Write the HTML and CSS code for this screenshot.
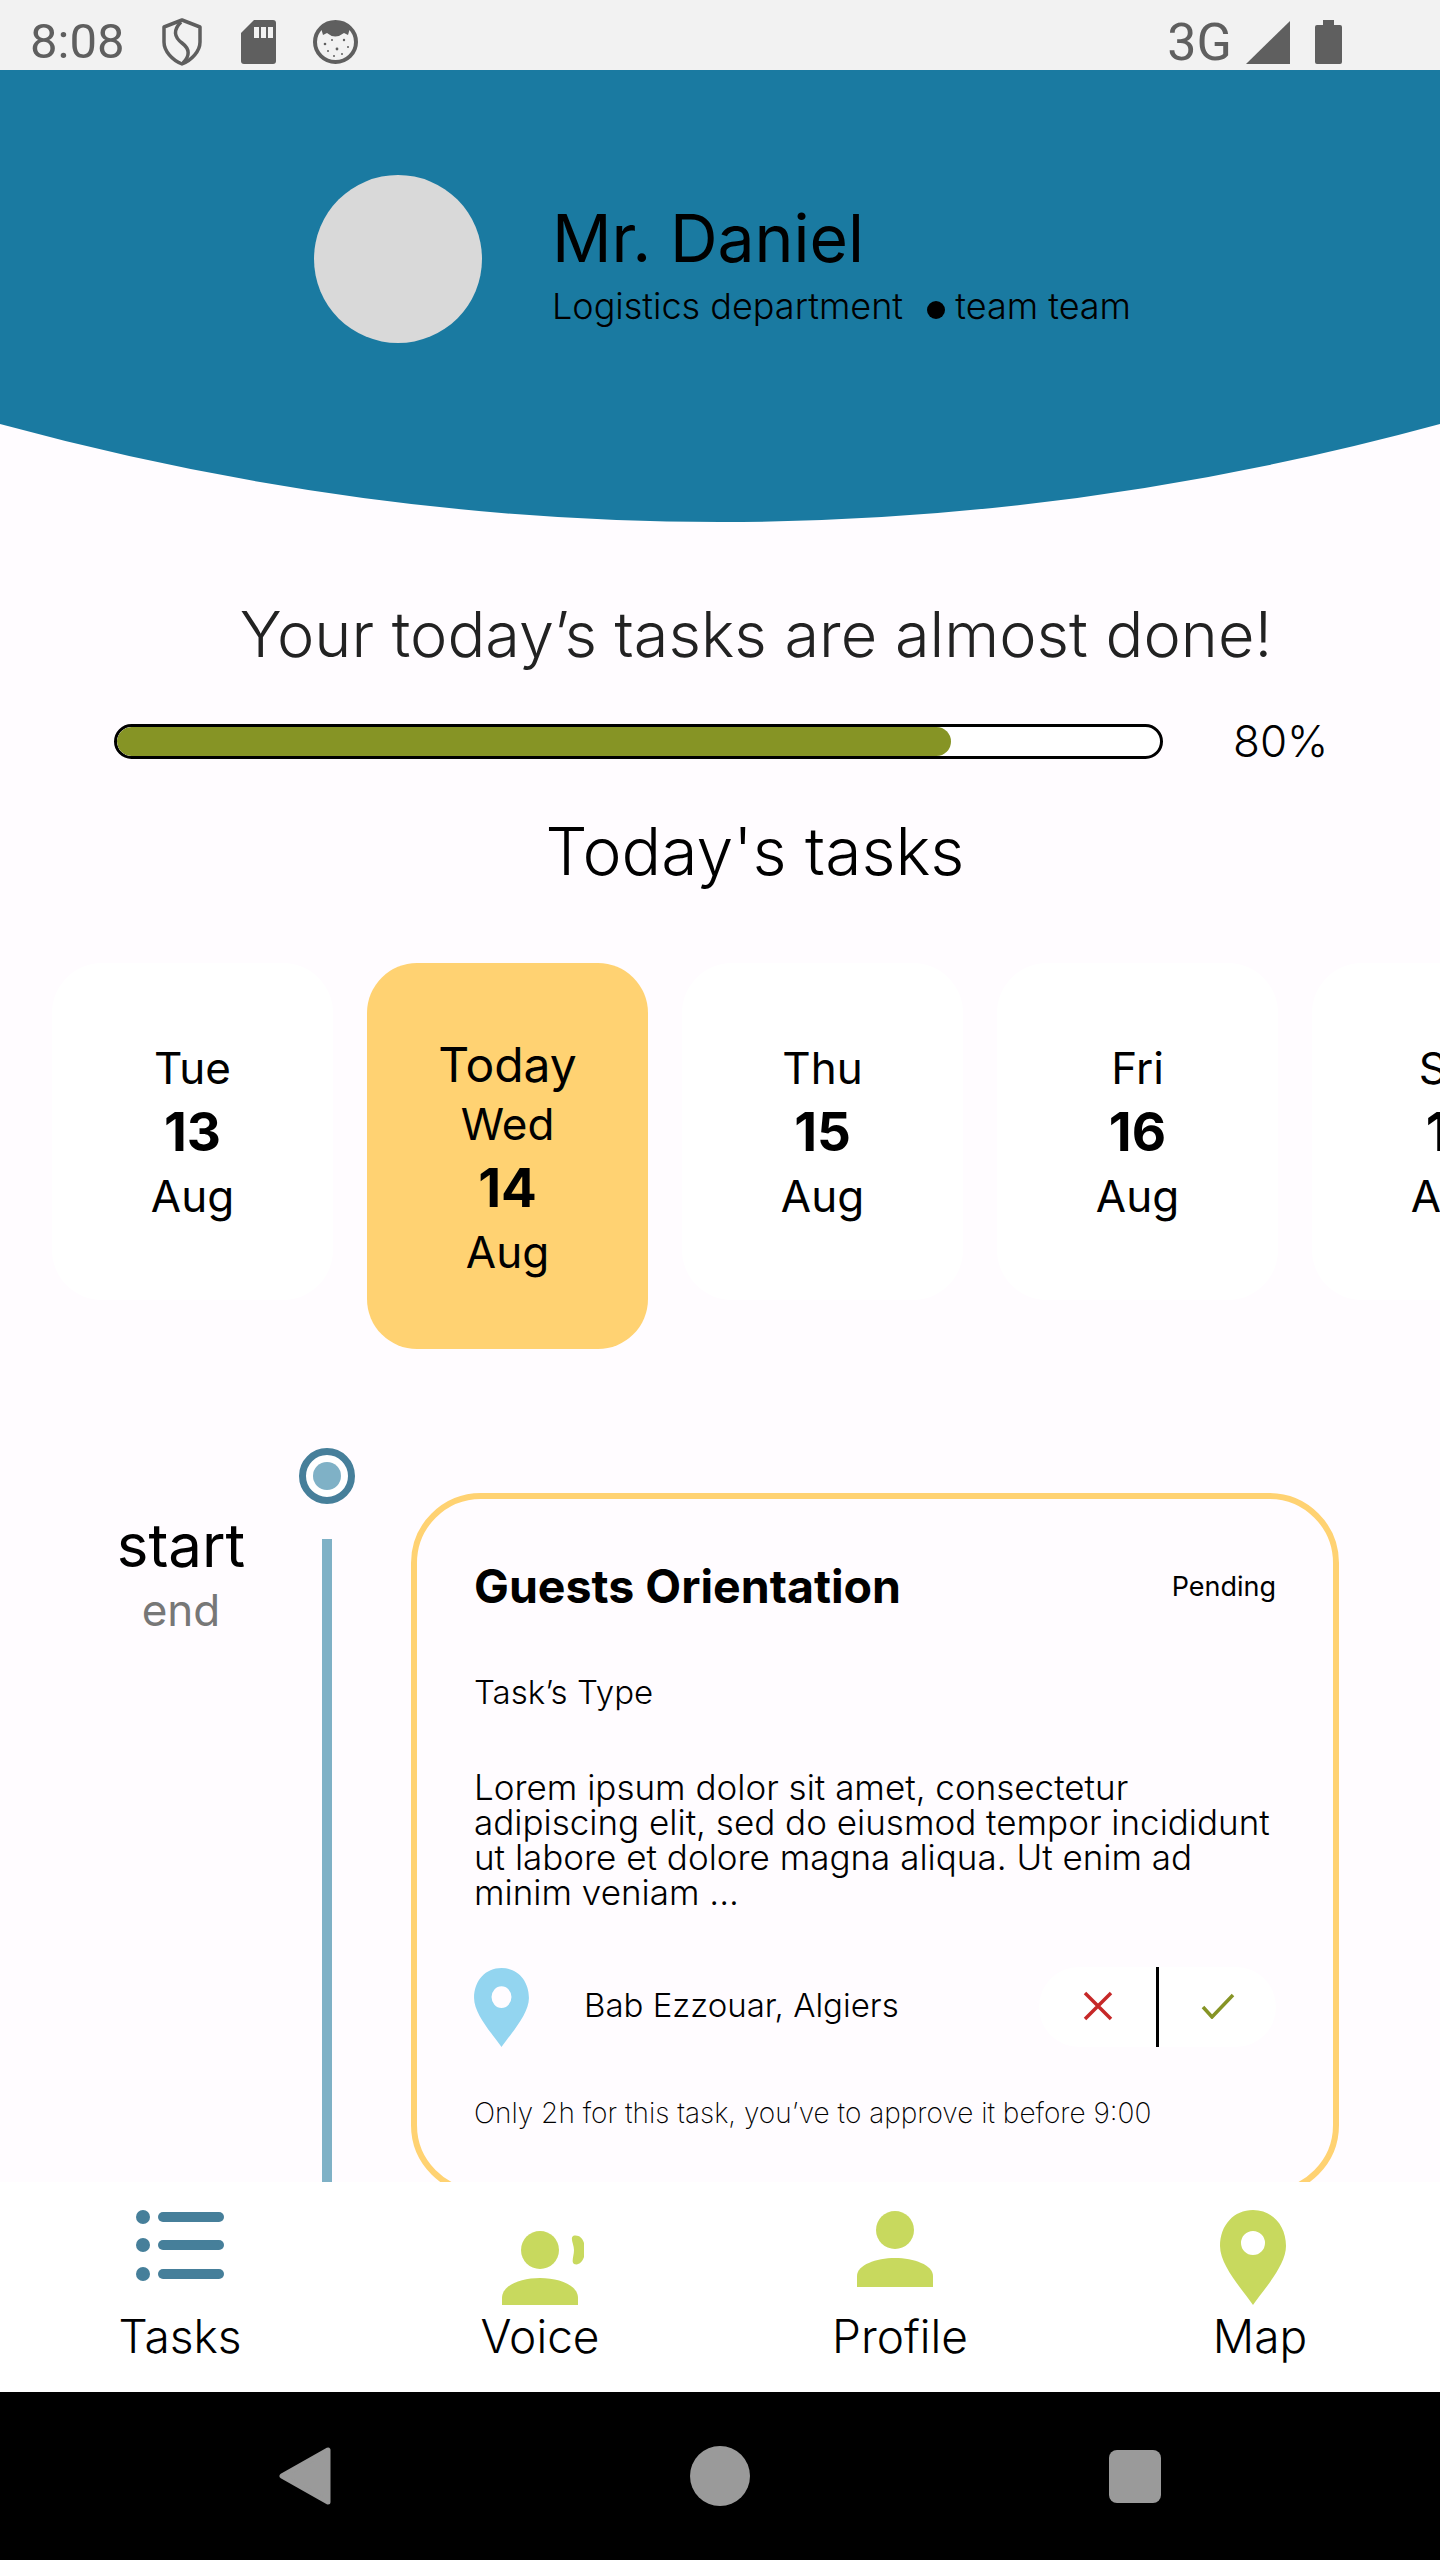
FILE: index.html
```html
<!DOCTYPE html>
<html lang="en">
<head>
  <meta charset="UTF-8" />
  <title>Today's tasks</title>
  <link rel="stylesheet" href="styles.css">
</head>
<body>
  <div class="phone">
    <div class="status-bar">
      <span class="clock">8:08</span>
      <svg class="ic-shield" viewBox="0 0 40 48"><path d="M20 2 L38 9 V24 C38 33 30 42 20 46 C10 42 2 33 2 24 V9 Z" fill="none" stroke="#5f5f5f" stroke-width="3.5" stroke-linejoin="round"/><path d="M19 4 C11 12 12 19 20 25 C28 31 28 38 21 45" fill="none" stroke="#5f5f5f" stroke-width="3.5"/></svg>
      <svg class="ic-sd" viewBox="0 0 35 44"><path d="M13 0 H32 Q35 0 35 3 V41 Q35 44 32 44 H3 Q0 44 0 41 V13 Z" fill="#5f5f5f"/><rect x="13" y="7" width="5" height="11" fill="#f2f2f2"/><rect x="20" y="7" width="5" height="11" fill="#f2f2f2"/><rect x="27" y="7" width="5" height="11" fill="#f2f2f2"/></svg>
      <svg class="ic-cat" viewBox="0 0 45 44"><ellipse cx="22.5" cy="22" rx="20.5" ry="20" fill="none" stroke="#5f5f5f" stroke-width="4"/><path d="M8 8 Q22 -4 37 8 L35 15 L31 13 Q22 20 14 13 L10 15 Z" fill="#5f5f5f"/><g fill="#5f5f5f"><circle cx="12" cy="24" r="1.3"/><circle cx="19" cy="20" r="1"/><circle cx="24" cy="29" r="1.4"/><circle cx="31" cy="20" r="1.2"/><circle cx="15" cy="31" r="1"/><circle cx="29" cy="34" r="1"/><circle cx="35" cy="27" r="1"/><circle cx="21" cy="36" r="1"/></g></svg>
      <span class="status-spacer"></span>
      <span class="net">3G</span>
      <svg class="ic-signal" viewBox="0 0 44 43"><path d="M44 0 V43 H0 Z" fill="#5f5f5f"/></svg>
      <svg class="ic-battery" viewBox="0 0 27 44"><path d="M8 0 H19 V5 H25 Q27 5 27 7 V42 Q27 44 25 44 H2 Q0 44 0 42 V7 Q0 5 2 5 H8 Z" fill="#5f5f5f"/></svg>
    </div>

    <main class="content">
      <header class="hero">
        <div class="avatar"></div>
        <div class="hero-text">
          <h2 class="hero-name">Mr. Daniel</h2>
          <p class="hero-sub">Logistics department <span class="hero-dot"></span>team team</p>
        </div>
      </header>
      <svg class="hero-curve" viewBox="0 0 1440 98" preserveAspectRatio="none"><path d="M0 0 H1440 Q720 196 0 0 Z" fill="#1a7aa1"/></svg>

      <p class="summary">Your today’s tasks are almost done!</p>
      <div class="progress-row">
        <div class="progress-track"><div class="progress-fill" style="width: 80%"></div></div>
        <span class="progress-label">80%</span>
      </div>
      <h1 class="section-title">Today's tasks</h1>

      <div class="days">
        <div class="day"><span>Tue</span><b>13</b><span>Aug</span></div>
        <div class="day day-active"><span class="day-today">Today</span><span>Wed</span><b>14</b><span>Aug</span></div>
        <div class="day"><span>Thu</span><b>15</b><span>Aug</span></div>
        <div class="day"><span>Fri</span><b>16</b><span>Aug</span></div>
        <div class="day"><span>Sat</span><b>17</b><span>Aug</span></div>
      </div>

      <section class="timeline">
        <div class="times">
          <div class="time-start">start</div>
          <div class="time-end">end</div>
        </div>
        <div class="rail">
          <div class="rail-dot"></div>
          <div class="rail-line"></div>
        </div>
        <article class="task">
          <div class="task-head">
            <h3 class="task-title">Guests Orientation</h3>
            <span class="task-status">Pending</span>
          </div>
          <p class="task-type">Task’s Type</p>
          <p class="task-desc">Lorem ipsum dolor sit amet, consectetur<br>adipiscing elit, sed do eiusmod tempor incididunt<br>ut labore et dolore magna aliqua. Ut enim ad<br>minim veniam ...</p>
          <div class="task-foot">
            <svg class="task-pin" viewBox="0 0 66 95"><path fill-rule="evenodd" d="M33 0 C52 0 66 15 66 36 C66 55 45 78 33 95 C21 78 0 55 0 36 C0 15 14 0 33 0 Z M33 22 A12 13 0 1 0 33 48 A12 13 0 1 0 33 22 Z" fill="#93d5f0"/></svg>
            <span class="task-place">Bab Ezzouar, Algiers</span>
            <div class="task-actions">
              <button class="action"><svg viewBox="0 0 30 30" width="30" height="30"><path d="M2 2 L28 28 M28 2 L2 28" stroke="#c62828" stroke-width="3.5" fill="none"/></svg></button>
              <button class="action action-ok"><svg viewBox="0 0 34 26" width="34" height="26"><path d="M2 14 L11 24 L32 2" stroke="#869425" stroke-width="3.5" fill="none"/></svg></button>
            </div>
          </div>
          <p class="task-note">Only 2h for this task, you’ve to approve it before 9:00</p>
        </article>
      </section>
    </main>

    <nav class="tabs">
      <div class="tab">
        <svg class="tab-icon" viewBox="0 0 88 96" width="88" height="96"><g fill="#467f9a"><circle cx="7" cy="7" r="7"/><circle cx="7" cy="35" r="7"/><circle cx="7" cy="64" r="7"/><rect x="22" y="2" width="66" height="10" rx="5"/><rect x="22" y="30" width="66" height="10" rx="5"/><rect x="22" y="59" width="66" height="10" rx="5"/></g></svg>
        <span>Tasks</span>
      </div>
      <div class="tab">
        <svg class="tab-icon" viewBox="0 0 88 96" width="88" height="96"><g fill="#c8d95e"><circle cx="44" cy="40" r="19"/><path d="M6 95 V88 C6 75 25 68 44 68 C63 68 82 75 82 88 V95 Z"/><path d="M77 26 C84 24 89 30 89 40 C89 50 84 56 78 54 C75 52 78 46 78 40 C78 34 74 29 77 26 Z"/></g></svg>
        <span>Voice</span>
      </div>
      <div class="tab">
        <svg class="tab-icon" viewBox="0 0 88 96" width="88" height="96"><g fill="#c8d95e"><circle cx="39" cy="20" r="19"/><path d="M1 77 V66 C1 55 20 48 39 48 C58 48 77 55 77 66 V77 Z"/></g></svg>
        <span>Profile</span>
      </div>
      <div class="tab">
        <svg class="tab-icon" viewBox="0 0 88 96" width="88" height="96"><path fill-rule="evenodd" d="M37 0 C56 0 70 15 70 36 C70 55 49 78 37 95 C25 78 4 55 4 36 C4 15 18 0 37 0 Z M37 21 A12 12 0 1 0 37 45 A12 12 0 1 0 37 21 Z" fill="#c8d95e"/></svg>
        <span>Map</span>
      </div>
    </nav>

    <div class="nav-bar">
      <svg class="nav-back" viewBox="0 0 52 58"><path d="M49 3 V55 L3 29 Z" fill="#9a9a9a" stroke="#9a9a9a" stroke-width="5" stroke-linejoin="round"/></svg>
      <div class="nav-home"></div>
      <div class="nav-recent"></div>
    </div>
  </div>
</body>
</html>
```

FILE: styles.css
```css
* {
  box-sizing: border-box;
}
html, body {
  margin: 0;
  padding: 0;
}
body {
  font-family: Inter, "Noto Sans", sans-serif;
  font-weight: 300;
  color: #000;
  background: #fffcff;
}
h1, h2, h3, p {
  margin: 0;
  font-weight: inherit;
}
.phone {
  width: 1440px;
  height: 2560px;
  display: flex;
  flex-direction: column;
  overflow: hidden;
}

/* status bar */
.status-bar {
  height: 70px;
  flex: none;
  background: #f2f2f2;
  display: flex;
  align-items: center;
  padding: 14px 0 0 30px;
  color: #5f5f5f;
  font-family: Roboto, sans-serif;
  font-weight: 400;
}
.clock {
  font-size: 49px;
  line-height: 56px;
  width: 132px;
}
.ic-shield {
  width: 40px;
  height: 48px;
  margin-right: 39px;
}
.ic-sd {
  width: 35px;
  height: 44px;
  margin-right: 37px;
}
.ic-cat {
  width: 45px;
  height: 44px;
}
.status-spacer {
  flex: 1;
}
.net {
  font-size: 52px;
  margin-right: 14px;
}
.ic-signal {
  width: 44px;
  height: 43px;
  margin-right: 25px;
}
.ic-battery {
  width: 27px;
  height: 44px;
  margin-right: 98px;
}

/* main */
.content {
  flex: 1;
  min-height: 0;
  overflow: hidden;
}
.hero {
  height: 354px;
  background: #1a7aa1;
  display: flex;
  padding: 105px 0 0 314px;
  gap: 70px;
}
.avatar {
  width: 168px;
  height: 168px;
  border-radius: 50%;
  background: #d9d9d9;
}
.hero-name {
  font-size: 66px;
  line-height: 80px;
  margin-top: 23px;
  font-weight: 400;
}
.hero-sub {
  font-size: 36px;
  line-height: 42px;
  margin-top: 7px;
}
.hero-dot {
  display: inline-block;
  width: 18px;
  height: 18px;
  border-radius: 50%;
  background: #000;
  margin: 0 10px 0 14px;
}
.hero-curve {
  display: block;
  width: 1440px;
  height: 98px;
}
.summary {
  margin-top: 72px;
  padding-left: 72px;
  text-align: center;
  font-size: 63px;
  line-height: 80px;
  color: #222;
}
.progress-row {
  margin-top: 49px;
  padding-left: 114px;
  display: flex;
  align-items: center;
  gap: 70px;
}
.progress-track {
  width: 1049px;
  height: 35px;
  border: 3px solid #000;
  border-radius: 18px;
  background: #fff;
  overflow: hidden;
}
.progress-fill {
  height: 100%;
  background: #869425;
  border-radius: 15px;
}
.progress-label {
  font-size: 44px;
  line-height: 36px;
}
.section-title {
  margin-top: 52px;
  padding-left: 70px;
  text-align: center;
  font-size: 66px;
  line-height: 80px;
}

/* day picker */
.days {
  margin-top: 72px;
  padding-left: 52px;
  display: flex;
  align-items: flex-start;
  gap: 34px;
}
.day {
  flex: none;
  width: 281px;
  height: 337px;
  border-radius: 50px;
  background: #fff;
  display: flex;
  flex-direction: column;
  align-items: center;
  justify-content: center;
  font-size: 44px;
  line-height: 64px;
  font-weight: 400;
}
.day b {
  font-size: 53px;
  font-weight: 700;
}
.day-today {
  font-size: 48px;
  margin: 5px 0 -5px;
}
.day-active {
  height: 386px;
  background: #ffd272;
}

/* timeline */
.timeline {
  margin-top: 99px;
  padding-left: 100px;
  display: flex;
  height: 800px;
}
.times {
  width: 162px;
  margin-right: 37px;
  padding-top: 60px;
  text-align: center;
}
.time-start {
  font-size: 60px;
  line-height: 74px;
  font-weight: 400;
}
.time-end {
  font-size: 44px;
  line-height: 56px;
  color: #777;
  font-weight: 400;
}
.rail {
  width: 56px;
  display: flex;
  flex-direction: column;
  align-items: center;
  margin-right: 56px;
}
.rail-dot {
  width: 56px;
  height: 56px;
  flex: none;
  border-radius: 50%;
  border: 7px solid #467f9a;
  background: #fff;
  padding: 7px;
  background-clip: padding-box;
}
.rail-dot::after {
  content: "";
  display: block;
  width: 28px;
  height: 28px;
  border-radius: 50%;
  background: #7fb1c6;
}
.rail-line {
  margin-top: 35px;
  width: 10px;
  flex: 1;
  background: #7fb1c6;
}
.task {
  width: 928px;
  height: 702px;
  margin-top: 45px;
  padding: 57px 57px 0;
  border: 6px solid #ffd272;
  border-radius: 70px;
  flex: none;
}
.task-head {
  display: flex;
  justify-content: space-between;
  align-items: center;
  height: 60px;
}
.task-title {
  font-size: 46.5px;
  font-weight: 700;
}
.task-status {
  font-size: 27px;
  font-weight: 400;
}
.task-type {
  margin-top: 56px;
  font-size: 33px;
  line-height: 40px;
}
.task-desc {
  margin-top: 58px;
  font-size: 35px;
  line-height: 35px;
}
.task-foot {
  margin-top: 57px;
  display: flex;
  align-items: center;
}
.task-pin {
  width: 55px;
  height: 79px;
  margin-right: 55px;
  flex: none;
}
.task-place {
  font-size: 33px;
  flex: 1;
  margin-bottom: 4px;
}
.task-actions {
  width: 237px;
  height: 80px;
  border-radius: 40px;
  background: #fff;
  display: flex;
}
.action {
  flex: 1;
  border: 0;
  background: none;
  padding: 0 0 2px;
  display: flex;
  align-items: center;
  justify-content: center;
}
.action-ok {
  border-left: 3px solid #000;
}
.task-note {
  margin-top: 48px;
  font-size: 28px;
  line-height: 36px;
  font-weight: 200;
}

/* bottom tabs */
.tabs {
  flex: none;
  height: 210px;
  background: #fff;
  display: grid;
  grid-template-columns: repeat(4, 1fr);
}
.tab {
  display: flex;
  flex-direction: column;
  align-items: center;
  padding-top: 28px;
  font-size: 46px;
  line-height: 56px;
}
.tab-icon {
  display: block;
}
.tab span {
  margin-top: 2px;
}

/* android nav */
.nav-bar {
  flex: none;
  height: 168px;
  background: #000;
  display: flex;
  align-items: center;
  justify-content: center;
  gap: 359px;
}
.nav-back {
  width: 52px;
  height: 58px;
}
.nav-home {
  width: 60px;
  height: 60px;
  border-radius: 50%;
  background: #9a9a9a;
}
.nav-recent {
  width: 52px;
  height: 53px;
  border-radius: 8px;
  background: #9a9a9a;
}
```
